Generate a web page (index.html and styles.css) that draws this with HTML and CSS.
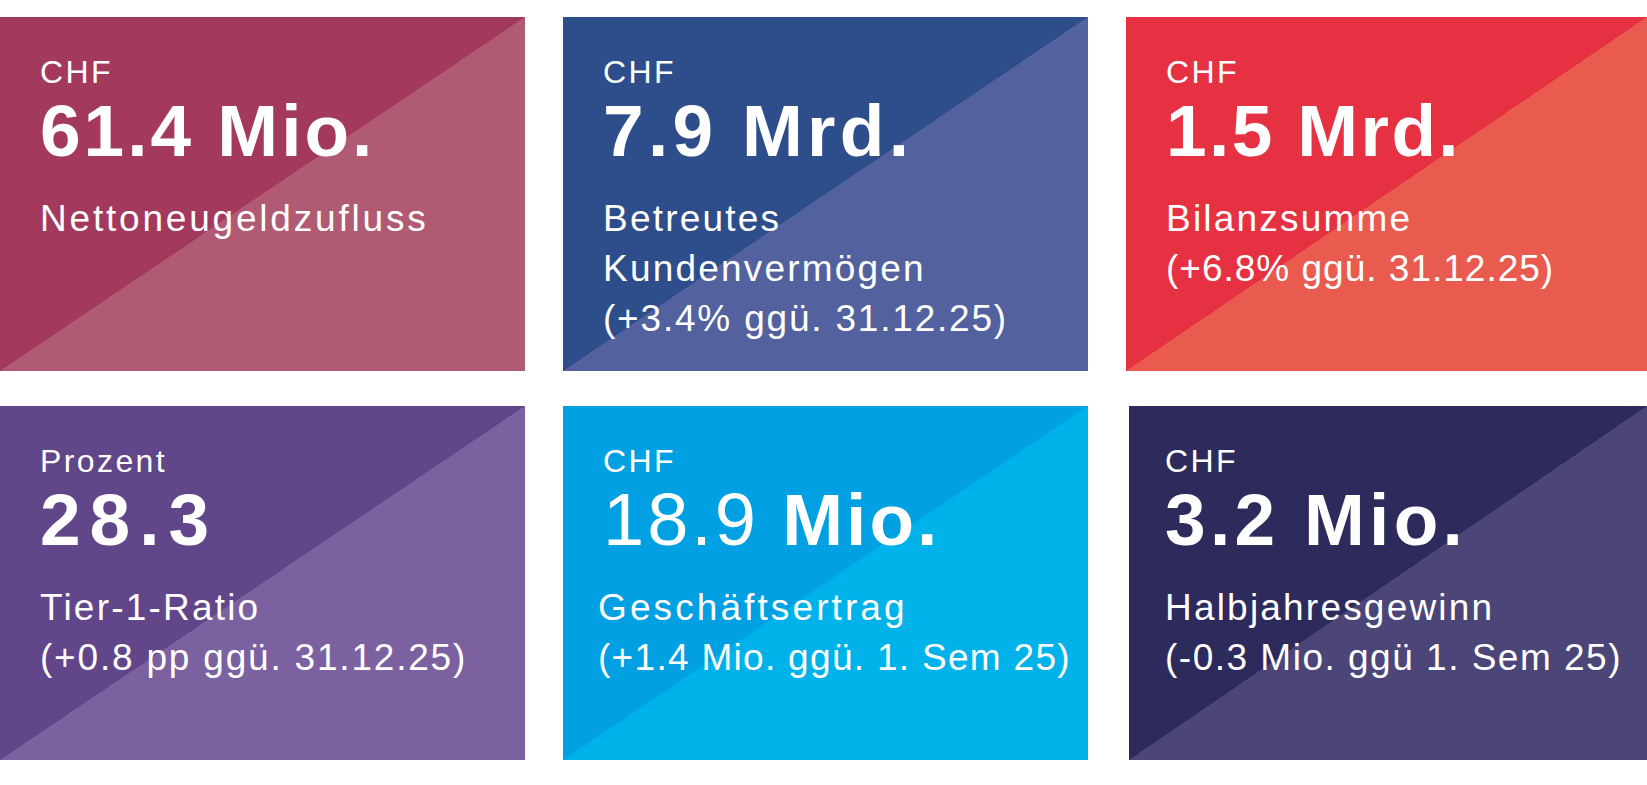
FILE: index.html
```html
<!DOCTYPE html>
<html lang="de">
<head>
<meta charset="utf-8">
<title>Kennzahlen</title>
<link rel="stylesheet" href="styles.css">
</head>
<body>
<main class="grid">
  <section class="card c-berry">
    <div class="unit">CHF</div>
    <div class="value">61.4 Mio.</div>
    <div class="desc wide">Nettoneugeldzufluss</div>
  </section>
  <section class="card c-navy">
    <div class="unit">CHF</div>
    <div class="value roomy">7.9 Mrd.</div>
    <div class="desc">Betreutes<br>Kundenvermögen<br><span class="digits">(+3.4% ggü. 31.12.25)</span></div>
  </section>
  <section class="card c-red">
    <div class="unit">CHF</div>
    <div class="value snug">1.5 Mrd.</div>
    <div class="desc">Bilanzsumme<br><span class="tight">(+6.8% ggü. 31.12.25)</span></div>
  </section>
  <section class="card c-purple">
    <div class="unit">Prozent</div>
    <div class="value spaced">28.3</div>
    <div class="desc">Tier-1-Ratio<br><span class="digits">(+0.8 pp ggü. 31.12.25)</span></div>
  </section>
  <section class="card c-cyan">
    <div class="unit">CHF</div>
    <div class="value"><span class="light">18.9</span> Mio.</div>
    <div class="desc shift"><span class="airy">Geschäftsertrag</span><br><span class="narrow">(+1.4 Mio. ggü. 1. Sem 25)</span></div>
  </section>
  <section class="card c-night">
    <div class="unit">CHF</div>
    <div class="value roomy">3.2 Mio.</div>
    <div class="desc">Halbjahresgewinn<br><span class="loose">(-0.3 Mio. ggü 1. Sem 25)</span></div>
  </section>
</main>
</body>
</html>
```

FILE: styles.css
```css
html, body {
  margin: 0;
  padding: 0;
  background: #ffffff;
}

body {
  font-family: "Liberation Sans", Arial, sans-serif;
  color: #ffffff;
  width: 1647px;
  height: 785px;
  overflow: hidden;
}

.grid {
  display: grid;
  grid-template-columns: 525px 525px 1fr;
  grid-template-rows: 354px 354px;
  column-gap: 38px;
  row-gap: 35px;
  padding-top: 17px;
}

.card {
  display: flex;
  flex-direction: column;
  padding: 37px 20px 0 40px;
}

.unit {
  font-size: 32px;
  line-height: 36px;
  letter-spacing: 2.4px;
}

.value {
  font-size: 73px;
  font-weight: 700;
  line-height: 82px;
  letter-spacing: 3px;
}

.value.roomy {
  letter-spacing: 4.3px;
}

.value.snug {
  letter-spacing: 2.4px;
}

.value.spaced {
  letter-spacing: 9px;
}

.value .light {
  font-size: 74px;
  line-height: 0;
  font-weight: 400;
  letter-spacing: 3px;
}

.desc {
  margin-top: 22px;
  font-size: 37px;
  line-height: 50px;
  letter-spacing: 2.2px;
  white-space: nowrap;
}

.desc.wide {
  letter-spacing: 2.8px;
}

.desc .digits {
  letter-spacing: 1.8px;
}

.desc .tight {
  letter-spacing: 1px;
}

.desc.shift {
  margin-left: -5px;
}

.desc .airy {
  letter-spacing: 3.1px;
}

.desc .narrow {
  letter-spacing: 1.3px;
}

.desc .loose {
  letter-spacing: 1.5px;
}

.c-berry  { background: linear-gradient(to bottom right, #a3395d 50%, #b05a74 50%); }
.c-navy   { background: linear-gradient(to bottom right, #2e4d8b 50%, #53629e 50%); }
.c-red    { background: linear-gradient(to bottom right, #e63143 50%, #e95b4f 50%); }
.c-purple { background: linear-gradient(to bottom right, #62468a 50%, #7b61a0 50%); }
.c-cyan   { background: linear-gradient(to bottom right, #00a0e2 50%, #00b2ea 50%); }
.c-night  {
  background: linear-gradient(to bottom right, #2d2a5c 50%, #4b4578 50%);
  margin-left: 3px;
  padding-left: 36px;
}
```
